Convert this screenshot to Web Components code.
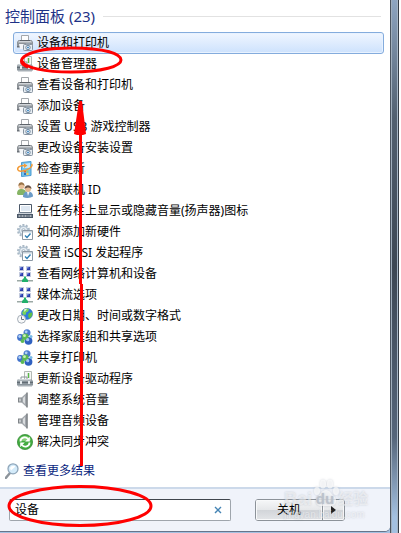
<!DOCTYPE html>
<html lang="zh-CN">
<head>
<meta charset="utf-8">
<title>控制面板</title>
<style>
  html, body {
    margin: 0;
    min-height: 100vh;
  }
  body {
    display: flex;
    background: #fff;
    color: #000;
    font: 12px/20px "Noto Sans", "Noto Sans CJK SC", sans-serif;
  }
</style>
</head>
<body>
<start-menu>
  <result-group label="控制面板 (23)">
    <result-item icon="printer" selected>设备和打印机</result-item>
    <result-item icon="device">设备管理器</result-item>
    <result-item icon="printer">查看设备和打印机</result-item>
    <result-item icon="printer">添加设备</result-item>
    <result-item icon="printer">设置 USB 游戏控制器</result-item>
    <result-item icon="printer">更改设备安装设置</result-item>
    <result-item icon="update">检查更新</result-item>
    <result-item icon="people">链接联机 ID</result-item>
    <result-item icon="taskbar">在任务栏上显示或隐藏音量(扬声器)图标</result-item>
    <result-item icon="gear">如何添加新硬件</result-item>
    <result-item icon="gear">设置 iSCSI 发起程序</result-item>
    <result-item icon="network">查看网络计算机和设备</result-item>
    <result-item icon="network">媒体流选项</result-item>
    <result-item icon="region">更改日期、时间或数字格式</result-item>
    <result-item icon="homegroup">选择家庭组和共享选项</result-item>
    <result-item icon="homegroup">共享打印机</result-item>
    <result-item icon="device">更新设备驱动程序</result-item>
    <result-item icon="speaker">调整系统音量</result-item>
    <result-item icon="speaker">管理音频设备</result-item>
    <result-item icon="sync">解决同步冲突</result-item>
  </result-group>
  <more-results slot="more">查看更多结果</more-results>
  <search-box slot="footer" value="设备"></search-box>
  <power-button slot="footer">关机</power-button>
</start-menu>
<site-watermark></site-watermark>
<red-marks></red-marks>

<script>
const icons = {
  printer: `
    <path d="M4.500 6V.5h7V6" fill="#fdfdfd" stroke="#a3a7ab"/>
    <path d="M1.500 5h13l1.500 2v5H0V7z" fill="#8f9499"/>
    <path d="M3 5h10v1H3z" fill="#5d6369"/>
    <path d="M2 6h12l1 1.500H1z" fill="#d0d4d8"/>
    <path d="M0 11h7v1.500H0z" fill="#6b7178"/>
    <path d="M2 9h6v5H3z" fill="#f4f6f8"/>
    <rect x="6.500" y="9.500" width="9" height="6" rx="1" fill="#e6ecf1" stroke="#8693a0"/>
    <rect x="9" y="8" width="4" height="2" fill="#98a4af"/>
    <circle cx="11" cy="12.500" r="2.200" fill="#f3f9fe" stroke="#587088" stroke-width=".8"/>
    <circle cx="11" cy="12.500" r=".9" fill="#2b7ab8"/>`,
  device: `
    <path d="M7.500.5h7v10h-7z" fill="#f6f8f6" stroke="#b3b9b5"/>
    <path d="M10 2h3v5h-3z" fill="#d2dbd3"/>
    <path d="M11 2h1v5h-1z" fill="#55bd42"/>
    <path d="M4 8V6h6v2" fill="none" stroke="#8b949a"/>
    <path d="M1 8h13l2 2v4.500H0V10z" fill="#8a949b"/>
    <path d="M1.500 8h12l1 1.500h-14z" fill="#cfd6da"/>
    <path d="M0 11h16v1H0z" fill="#626c74"/>
    <path d="M3 10h2v3H3zM11 10h2v3h-2z" fill="#e6ebee"/>
    <path d="M1 14h14v1.500H1z" fill="#a7afb5"/>`,
  update: `
    <path d="M4.500 1.500 14 .5v14l-9.500 1z" fill="#74c2ec" stroke="#4b9bd0"/>
    <path d="M6 3l7-1v5H6z" fill="#c3e8fa"/>
    <path d="M7 9.500h2v2H7z" fill="#e35b38"/><path d="M9.500 9.500h2v2h-2z" fill="#8fd06f"/>
    <path d="M7 12h2v2H7z" fill="#2c74be"/><path d="M9.500 12h2v2h-2z" fill="#f6cf4f"/>
    <path d="M8 4.500C2 4 0 7 1 9s7 1.500 12-2c2-1.500 2.500-3 1.500-4" fill="none" stroke="#f39a35" stroke-width="1.500"/>
    <path d="M7 2.500l3.500 2L7 7z" fill="#f39a35"/>`,
  people: `
    <path d="M0 12c0-4 2-5 4.500-5S9 8 9 11l-2 2H1z" fill="#86b465"/>
    <circle cx="4.500" cy="4" r="3" fill="#e9c09a"/>
    <path d="M1.500 4c-.5-5 6-5 6 0C6 2 4 2 1.500 4z" fill="#9a7347"/>
    <path d="M6 15c0-4 2-5.500 5-5.500s5 1.500 5 5c-2 1.500-7 2-10 .5z" fill="#6c9cc8"/>
    <path d="M10 10h2.500L11 14z" fill="#f3f6f8"/>
    <circle cx="11" cy="7" r="3" fill="#e7ba92"/>
    <path d="M7.500 7c0-5 7-5 7 0-2-2-4-2-7 0z" fill="#6b5548"/>`,
  taskbar: `
    <path d="M2.500 1.500h12v8h-12z" fill="#fff" stroke="#4b5868"/>
    <path d="M4 3h9v5H4z" fill="#dfe8f2"/>
    <path d="M1 9.500h14v1H1z" fill="#9aa6b4"/>
    <path d="M0 11h16v4H0z" fill="#4b5868"/>
    <path d="M1.500 12.500h2v1h-2zM4.500 12.500h2v1h-2zM7.500 12.500h2v1h-2zM10.500 12.500h1v1h-1zM12.500 12.500h2v1h-2z" fill="#fff"/>`,
  gear: `
    <circle cx="6.500" cy="6.500" r="5.500" fill="none" stroke="#a9b8c5" stroke-width="2" stroke-dasharray="2 1.450"/>
    <circle cx="6.500" cy="6.500" r="4.200" fill="#eaf0f5" stroke="#b4c4d2" stroke-width="1.500"/>
    <circle cx="6.500" cy="6.500" r="1.800" fill="#fff" stroke="#9fb0c0"/>
    <path d="M5.500 6.500h10v9h-10z" fill="#fff" stroke="#8c99a5"/>
    <path d="M6 7h9v1.500H6z" fill="#c5d0d9"/>
    <path d="M8 11.500l2 2 3.500-4" fill="none" stroke="#2e7fb4" stroke-width="1.400"/>`,
  network: `
    <path d="M2 0h5v5H2zM9 0h5v5H9zM2 6h5v5H2zM9 6h5v5H9z" fill="#c3cadd"/>
    <path d="M3 1h3v3H3zM10 1h3v3h-3zM3 7h3v3H3zM10 7h3v3h-3z" fill="#2c3cab"/>
    <path d="M3 1h1.500v1.500H3zM10 1h1.500v1.500H10zM3 7h1.500v1.500H3zM10 7h1.500v1.500H10z" fill="#7e95e6"/>
    <path d="M0 14h16v1.500H0z" fill="#9ba8a5"/>
    <path d="M7 10.500h2V12l2 2v2H5v-2l2-2z" fill="#22b06c"/>`,
  region: `
    <circle cx="10" cy="5.800" r="5.600" fill="#2f7ddb" stroke="#3a6fb0" stroke-width=".5"/>
    <path d="M7 1.500c2-1.500 4-1 5 0l-1 2-2 1v2L6.500 7 5 5z" fill="#7ad45a"/>
    <path d="M12 5l3-.5c.8 3-1 5-3 6l-1-3z" fill="#5fc048"/>
    <path d="M7 1.500c1.500-.8 2.500-.8 3-.5L7.500 4z" fill="#e3f9dc"/>
    <circle cx="4.500" cy="11.200" r="4" fill="#f8f9fa" stroke="#a4adb6"/>
    <path d="M4.500 8.500v3h2.500" fill="none" stroke="#6a7580"/>`,
  homegroup: `
    <circle cx="10" cy="3.800" r="3.500" fill="#4a7bcf"/>
    <circle cx="3.500" cy="8.500" r="3.400" fill="#4273cb"/>
    <circle cx="11.500" cy="11.800" r="3.900" fill="#2f60c0"/>
    <circle cx="8.300" cy="7.700" r="3.300" fill="#5bb954"/>
    <circle cx="5.500" cy="12" r="2" fill="#5bb954"/>
    <circle cx="14" cy="7.500" r="1.500" fill="#76b9e6"/>
    <circle cx="9.200" cy="2.800" r="1.400" fill="#b3d2f5"/>
    <circle cx="2.700" cy="7.500" r="1.400" fill="#b3d2f5"/>
    <circle cx="7.500" cy="6.700" r="1.400" fill="#cdf1bb"/>
    <circle cx="10.700" cy="10.700" r="1.600" fill="#a0c5f4"/>`,
  speaker: `
    <path d="M1 5.500h4v5H1z" fill="#7f8488"/>
    <path d="M2 6.500h2v3H2z" fill="#c2c5c8"/>
    <path d="M4.500 5.500 10 .5v15l-5.500-5z" fill="#a2a7ac"/>
    <path d="M6 6l2-2v8L6 10z" fill="#d9dcde"/>
    <path d="M9.500.5h1.200v15H9.500z" fill="#6c7175"/>`,
  sync: `
    <circle cx="8" cy="8" r="7.600" fill="#43ab41" stroke="#2f8731" stroke-width=".7"/>
    <path d="M2 6a6.500 6.500 0 0 1 12 0c-3 2-9 1-12 0z" fill="#8ad07c"/>
    <path d="M3.500 7.500c0-4 5-5.500 7.500-2.500M12.500 8.500c0 4-5 5.500-7.500 2.500" fill="none" stroke="#fff" stroke-width="1.800"/>
    <path d="M12.800 2.800v4.700H8.200zM3.200 13.200V8.500h4.600z" fill="#fff"/>`
};

class StartMenu extends HTMLElement {
  constructor() {
    super();
    this.attachShadow({ mode: 'open' }).innerHTML = `
      <style>
        :host {
          flex: 1;
          display: flex;
          margin-right: 2px;
          padding: 0 9px 2px 0;
          box-sizing: border-box;
          background:
            linear-gradient(90deg, #4b545f 1px, #a0aebd 1px 2px, transparent 2px 7px, #a5b4c4 7px 8px, #343c46 8px) right / 9px 100% no-repeat,
            linear-gradient(#8ea5c1, #526070 22%, #3d4754 50%, #55657a 82%, #a3c0e0 97%);
        }
        .pane {
          flex: 1;
          display: flex;
          flex-direction: column;
          background: #fff;
          border-radius: 0 0 5px 0;
          overflow: hidden;
          box-shadow: 0 1px #66758a;
        }
        .results {
          flex: 1;
          padding: 4px 6px 5px 5px;
        }
        footer {
          display: flex;
          align-items: center;
          gap: 24px;
          height: 44px;
          padding: 0 45px 0 9px;
          box-sizing: border-box;
          border-top: 2px solid #ccd9ea;
          background: #f0f3fa;
        }
      </style>
      <div class="pane">
        <div class="results">
          <slot></slot>
          <slot name="more"></slot>
        </div>
        <footer><slot name="footer"></slot></footer>
      </div>`;
  }
}

class ResultGroup extends HTMLElement {
  constructor() {
    super();
    this.attachShadow({ mode: 'open' }).innerHTML = `
      <style>
        :host { display: block; }
        h2 {
          display: flex;
          align-items: center;
          gap: 8px;
          margin: 0 3px 4px 0;
          color: #1e3287;
          font-size: 15px;
          font-weight: normal;
          line-height: 24px;
        }
        h2::after {
          content: "";
          flex: 1;
          height: 1px;
          background: #e2e2e2;
        }
        .list { padding-left: 8px; }
      </style>
      <h2></h2>
      <div class="list"><slot></slot></div>`;
    this.shadowRoot.querySelector('h2').textContent = this.getAttribute('label');
  }
}

class ResultItem extends HTMLElement {
  constructor() {
    super();
    this.attachShadow({ mode: 'open' }).innerHTML = `
      <style>
        :host {
          display: block;
          height: 21px;
        }
        a {
          display: flex;
          align-items: center;
          gap: 4px;
          height: 22px;
          padding: 0 3px;
          box-sizing: border-box;
          border: 1px solid transparent;
          border-radius: 3px;
          color: inherit;
          text-decoration: none;
          white-space: nowrap;
        }
        :host([selected]) a {
          border-color: #84acdd;
          background: linear-gradient(#f0f6ff, #cde2fd);
          box-shadow: inset 0 0 0 1px #e8f2ff;
        }
        svg { flex: none; }
      </style>
      <a href="#">
        <svg width="16" height="16" viewBox="0 0 16 16" aria-hidden="true">${icons[this.getAttribute('icon')]}</svg>
        <slot></slot>
      </a>`;
  }
}

class MoreResults extends HTMLElement {
  constructor() {
    super();
    this.attachShadow({ mode: 'open' }).innerHTML = `
      <style>
        :host {
          display: block;
          margin-top: 8px;
        }
        a {
          display: flex;
          align-items: center;
          gap: 4px;
          height: 22px;
          color: #0a1f80;
          text-decoration: none;
        }
      </style>
      <a href="#">
        <svg width="14" height="16" viewBox="0 0 14 16" aria-hidden="true">
          <path d="M5 10 .8 15" stroke="#8d949b" stroke-width="2.400" stroke-linecap="round"/>
          <circle cx="8" cy="5.800" r="5" fill="#d4ebfa" stroke="#8fa6ba" stroke-width="1.300"/>
          <path d="M5 5c1-2.500 4-3 5.500-1.500L6 7.500z" fill="#fff"/>
        </svg>
        <slot></slot>
      </a>`;
  }
}

class SearchBox extends HTMLElement {
  constructor() {
    super();
    this.attachShadow({ mode: 'open' }).innerHTML = `
      <style>
        :host {
          flex: 1;
          min-width: 0;
          display: flex;
          height: 22px;
          box-sizing: border-box;
          border: 1px solid #9fa5ac;
          border-top-color: #3f454d;
          border-radius: 2px;
          background: #fff;
        }
        input {
          flex: 1;
          min-width: 0;
          padding: 0 0 0 5px;
          border: 0;
          outline: 0;
          background: none;
          color: inherit;
          font: inherit;
        }
        button {
          display: grid;
          place-items: center;
          width: 24px;
          padding: 0;
          border: 0;
          background: none;
        }
      </style>
      <input type="text" aria-label="搜索程序和文件" value="${this.getAttribute('value')}">
      <button type="button" aria-label="清除">
        <svg width="8" height="8" viewBox="0 0 8 8"><path d="M1 1l6 6M7 1 1 7" stroke="#4584b4" stroke-width="1.400"/></svg>
      </button>`;
  }
}

class PowerButton extends HTMLElement {
  constructor() {
    super();
    this.attachShadow({ mode: 'open' }).innerHTML = `
      <style>
        :host {
          display: flex;
          height: 22px;
          box-sizing: border-box;
          border: 1px solid #8c9299;
          border-radius: 3px;
          overflow: hidden;
        }
        button {
          display: grid;
          place-items: center;
          padding: 0;
          border: 0;
          background: linear-gradient(#f6f7f8, #e6e8ea 48%, #d2d5d9 52%, #e3e5e8);
          box-shadow: inset 0 0 0 1px #f8f9fa;
          color: inherit;
          font: inherit;
        }
        .off { width: 66px; }
        .menu {
          width: 22px;
          border-left: 1px solid #8c9299;
        }
      </style>
      <button type="button" class="off"><slot></slot></button>
      <button type="button" class="menu" aria-label="关机选项">
        <svg width="5" height="8" viewBox="0 0 5 8"><path d="M0 0l5 4-5 4z" fill="#222"/></svg>
      </button>`;
  }
}

class SiteWatermark extends HTMLElement {
  constructor() {
    super();
    this.attachShadow({ mode: 'open' }).innerHTML = `
      <style>
        :host {
          position: absolute;
          left: 284px;
          top: 479px;
          pointer-events: none;
          color: rgba(255, 255, 255, .5);
          text-shadow: 0 0 2px rgba(130, 140, 155, .4);
        }
        svg {
          position: absolute;
          left: 29px;
          top: 0;
          filter: drop-shadow(0 0 1px rgba(130, 140, 155, .5));
        }
        .name {
          display: flex;
          align-items: center;
          height: 20px;
          padding-top: 10px;
          font: bold 18px/20px "Liberation Sans", "Noto Sans CJK SC", sans-serif;
        }
        .du {
          position: relative;
          width: 26px;
          text-align: center;
          color: rgba(185, 192, 202, .9);
          font-size: 15px;
        }
        .cn { font-size: 15px; }
        .url {
          font: 10px/12px "Liberation Sans", sans-serif;
        }
      </style>
      <svg width="26" height="28" viewBox="0 0 26 28" fill="#fff" fill-opacity=".7" aria-hidden="true">
        <ellipse cx="10" cy="5" rx="3" ry="4.500"/>
        <ellipse cx="17" cy="5" rx="3" ry="4.500"/>
        <ellipse cx="4" cy="12" rx="3" ry="4"/>
        <ellipse cx="23" cy="12" rx="3" ry="4"/>
        <path d="M13 11c4 0 5 4 8 6 4 4 2 10-3 10H8c-5 0-7-6-3-10 3-2 4-6 8-6z"/>
      </svg>
      <div class="name"><span>Bai</span><span class="du">du</span><span class="cn">经验</span></div>
      <div class="url">jingyan.baidu.com</div>`;
  }
}

class RedMarks extends HTMLElement {
  constructor() {
    super();
    this.attachShadow({ mode: 'open' }).innerHTML = `
      <style>
        :host {
          position: absolute;
          left: 0;
          top: 0;
          pointer-events: none;
        }
        svg { display: block; }
      </style>
      <svg width="160" height="530" viewBox="0 0 160 530" aria-hidden="true">
        <g fill="none" stroke="#f00" stroke-width="3">
          <path d="M28 67C12 61 25 48 71 48c35 0 50 6 50 12s-18 12-50 12c-26 0-46-4-49-11"/>
          <ellipse cx="80" cy="506" rx="71" ry="19.500"/>
          <path d="M80.500 130v154M81.500 284v182"/>
        </g>
        <path d="M79 101h3l4 33-3 1h-6l-3-1z" fill="#f00"/>
      </svg>`;
  }
}

customElements.define('start-menu', StartMenu);
customElements.define('result-group', ResultGroup);
customElements.define('result-item', ResultItem);
customElements.define('more-results', MoreResults);
customElements.define('search-box', SearchBox);
customElements.define('power-button', PowerButton);
customElements.define('site-watermark', SiteWatermark);
customElements.define('red-marks', RedMarks);
</script>
</body>
</html>
